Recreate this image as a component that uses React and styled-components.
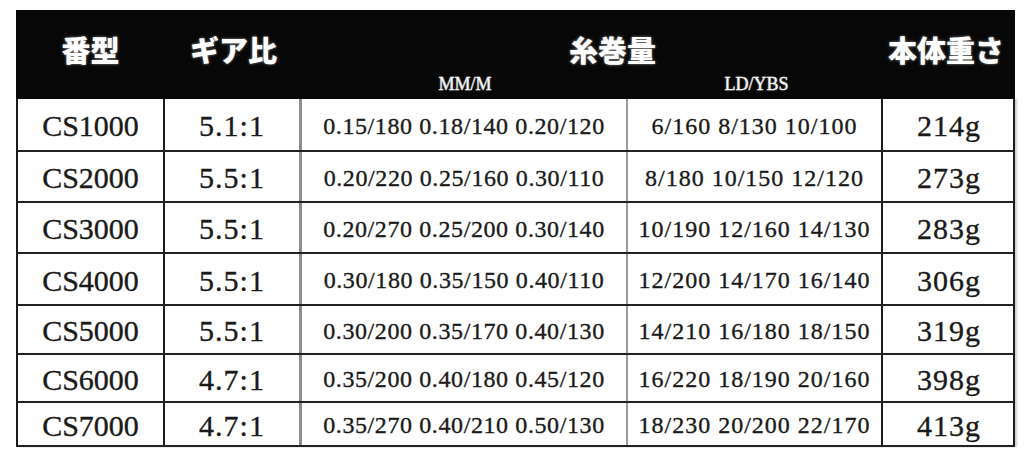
import React from "react";
import styled, { createGlobalStyle } from "styled-components";

const GlobalStyle = createGlobalStyle`
  html, body {
    margin: 0;
    padding: 0;
    background: #ffffff;
  }
  body {
    font-family: "Liberation Serif", "Times New Roman", serif;
  }
`;

const COLUMNS = "147px 137px 326px 255px 132px";

const Page = styled.div`
  width: 1024px;
  height: 454px;
  padding: 10px 0 0 16px;
  box-sizing: border-box;
  overflow: hidden;
`;

const Table = styled.div`
  width: 999px;
  display: flex;
  flex-direction: column;
`;

const Header = styled.div`
  display: grid;
  grid-template-columns: 149px 137px 571px 142px;
  height: 89px;
  background: #070707;
  color: #ffffff;
`;

const HeadLabel = styled.div`
  font-family: "Noto Sans CJK JP", "Noto Sans", sans-serif;
  font-weight: 900;
  font-size: 29px;
  line-height: 1;
  padding-top: 25px;
  padding-left: ${({ $shift }) => $shift || 0}px;
  text-align: center;
  white-space: nowrap;
  text-shadow: 0 0 3px rgba(255, 255, 255, 0.55);
`;

const SpanHead = styled.div`
  display: grid;
  grid-template-columns: 326px 245px;
  grid-template-rows: 40px 1fr;
`;

const SpanTitle = styled(HeadLabel)`
  grid-column: 1 / span 2;
  padding-left: 50px;
`;

const SubLabel = styled.div`
  font-family: "Liberation Serif", "Times New Roman", serif;
  font-size: 18px;
  line-height: 1;
  padding-top: 25px;
  padding-left: ${({ $shift }) => $shift || 0}px;
  text-align: center;
  color: #f4f4f4;
  -webkit-text-stroke: 0.3px #f4f4f4;
  text-shadow: 0 0 2px rgba(255, 255, 255, 0.5);
`;

const Body = styled.div`
  border-left: 2px solid #1c1c1c;
  border-right: 2px solid #1c1c1c;
  box-shadow: 2px 0 2px rgba(0, 0, 0, 0.2);
`;

const Row = styled.div`
  display: grid;
  grid-template-columns: ${COLUMNS};
  height: ${({ $h }) => $h}px;
  box-sizing: border-box;
  border-bottom: 2px solid #222222;
`;

const dividers = {
  dark: "2px solid #1e1e1e",
  gray: "3px solid #8c8c8c",
  light: "2px solid #9a9a9a",
  none: "none",
};

const Cell = styled.div`
  display: flex;
  align-items: center;
  justify-content: center;
  box-sizing: border-box;
  border-right: ${({ $div }) => dividers[$div || "none"]};
  color: #1a1a1a;
  font-size: ${({ $big }) => ($big ? 30 : 24)}px;
  letter-spacing: ${({ $ls }) => $ls || 0}px;
  -webkit-text-stroke: 0.35px #1a1a1a;
  white-space: nowrap;
  padding-top: 3px;
`;

const rows = [
  ["CS1000", "5.1:1", "0.15/180 0.18/140 0.20/120", "6/160 8/130 10/100", "214g", 53],
  ["CS2000", "5.5:1", "0.20/220 0.25/160 0.30/110", "8/180 10/150 12/120", "273g", 51],
  ["CS3000", "5.5:1", "0.20/270 0.25/200 0.30/140", "10/190 12/160 14/130", "283g", 51],
  ["CS4000", "5.5:1", "0.30/180 0.35/150 0.40/110", "12/200 14/170 16/140", "306g", 52],
  ["CS5000", "5.5:1", "0.30/200 0.35/170 0.40/130", "14/210 16/180 18/150", "319g", 49],
  ["CS6000", "4.7:1", "0.35/200 0.40/180 0.45/120", "16/220 18/190 20/160", "398g", 48],
  ["CS7000", "4.7:1", "0.35/270 0.40/210 0.50/130", "18/230 20/200 22/170", "413g", 44],
];

const App = () => {
  return (
    <Page>
      <GlobalStyle />
      <Table>
        <Header>
          <HeadLabel $shift={-2}>番型</HeadLabel>
          <HeadLabel $shift={-12}>ギア比</HeadLabel>
          <SpanHead>
            <SpanTitle>糸巻量</SpanTitle>
            <SubLabel>MM/M</SubLabel>
            <SubLabel $shift={12}>LD/YBS</SubLabel>
          </SpanHead>
          <HeadLabel $shift={4}>本体重さ</HeadLabel>
        </Header>
        <Body>
          {rows.map(([model, gear, mm, ld, weight, h]) => (
            <Row key={model} $h={h}>
              <Cell $big $div="dark">{model}</Cell>
              <Cell $big $ls={1} $div="gray">{gear}</Cell>
              <Cell $ls={0.6} $div="light">{mm}</Cell>
              <Cell $ls={1} $div="dark">{ld}</Cell>
              <Cell $big $ls={1}>{weight}</Cell>
            </Row>
          ))}
        </Body>
      </Table>
    </Page>
  );
};

export default App;
